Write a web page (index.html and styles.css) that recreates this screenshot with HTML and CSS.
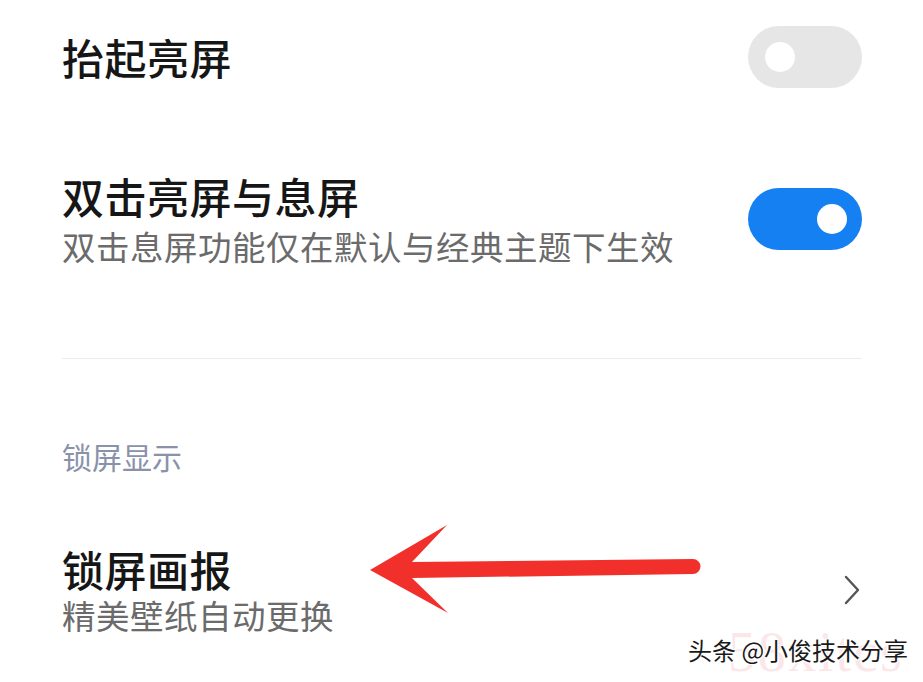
FILE: index.html
```html
<!DOCTYPE html>
<html lang="zh-CN">
  <head>
    <meta charset="UTF-8" />
    <meta name="viewport" content="width=device-width, initial-scale=1.0" />
    <title>锁屏设置</title>
    <link rel="stylesheet" href="styles.css">
  </head>
  <body>
    <div class="screen">
      <div class="row row-first">
        <div class="row-text">
          <h2 class="row-title">抬起亮屏</h2>
        </div>
        <span class="toggle"><span class="knob"></span></span>
      </div>

      <div class="row row-second">
        <div class="row-text">
          <h2 class="row-title">双击亮屏与息屏</h2>
          <p class="row-sub">双击息屏功能仅在默认与经典主题下生效</p>
        </div>
        <span class="toggle on"><span class="knob"></span></span>
      </div>

      <div class="divider"></div>

      <p class="section-label">锁屏显示</p>

      <div class="row row-third">
        <div class="row-text">
          <h2 class="row-title">锁屏画报</h2>
          <p class="row-sub">精美壁纸自动更换</p>
        </div>
        <svg class="chevron" width="16" height="30" viewBox="0 0 16 30">
          <polyline points="2,2 14,15 2,28" fill="none" stroke="#555" stroke-width="2.4" stroke-linecap="round" stroke-linejoin="round" />
        </svg>
      </div>

      <!-- red annotation arrow -->
      <svg class="arrow" width="923" height="682" viewBox="0 0 923 682">
        <path d="M370 570 L447 525 L412 562 L693 559 A7.5 7.5 0 0 1 693 574 L412 578 L448 613 Z" fill="#f2302b" />
      </svg>

      <div class="watermark">
        <span class="wm-back">58xitcs</span>
        <span class="wm-front">头条 @小俊技术分享</span>
      </div>
    </div>
  </body>
</html>
```

FILE: styles.css
```css
* {
  margin: 0;
  padding: 0;
  box-sizing: border-box;
}

body {
  font-family: "Noto Sans CJK SC", "Noto Sans", sans-serif;
  background: #ffffff;
  color: #1a1a1a;
  width: 923px;
  height: 682px;
  overflow: hidden;
}

.screen {
  position: relative;
  height: 682px;
  padding: 0 61px 0 62px;
  display: flex;
  flex-direction: column;
}

.row {
  display: flex;
  align-items: center;
  justify-content: space-between;
}

.row-first {
  height: 114px;
}

.row-second {
  padding-top: 57px;
  padding-bottom: 92px;
}

.row-third {
  margin-top: 72px;
}

.row-text {
  display: flex;
  flex-direction: column;
}

.row-title {
  font-size: 42px;
  font-weight: 500;
  line-height: 50px;
  color: #161616;
  letter-spacing: 0.5px;
}

.row-sub {
  font-size: 33.5px;
  line-height: 40px;
  color: #6b6b6b;
  margin-top: 5px;
  letter-spacing: 0.5px;
}

.row-third .row-title {
  line-height: 46px;
}

.row-third .row-sub {
  line-height: 38px;
  margin-top: 4px;
}

.toggle {
  position: relative;
  width: 114px;
  height: 62px;
  border-radius: 31px;
  background: #e6e6e6;
  flex-shrink: 0;
}

.toggle .knob {
  position: absolute;
  top: 16px;
  left: 17px;
  width: 30px;
  height: 30px;
  border-radius: 50%;
  background: #ffffff;
}

.toggle.on {
  background: #1580f2;
}

.toggle.on .knob {
  left: auto;
  right: 15px;
}

.divider {
  height: 1px;
  background: #ececec;
}

.section-label {
  margin-top: 79px;
  font-size: 30px;
  line-height: 36px;
  color: #8a92aa;
}

.chevron {
  margin-right: 2px;
  flex-shrink: 0;
}

.arrow {
  position: absolute;
  left: 0;
  top: 0;
  pointer-events: none;
}

.watermark {
  position: absolute;
  left: 688px;
  top: 628px;
  width: 230px;
  height: 50px;
}

.wm-back {
  position: absolute;
  left: 40px;
  top: -8px;
  font-family: "Liberation Serif", serif;
  font-size: 56px;
  color: rgba(236, 140, 150, 0.22);
  letter-spacing: 2px;
}

.wm-front {
  position: absolute;
  left: 0;
  top: 7px;
  font-size: 24px;
  line-height: 30px;
  color: #1a1a1a;
  white-space: nowrap;
  text-shadow: 1px 1px 0 #fff, -1px -1px 0 #fff, 1px -1px 0 #fff, -1px 1px 0 #fff;
}
```
